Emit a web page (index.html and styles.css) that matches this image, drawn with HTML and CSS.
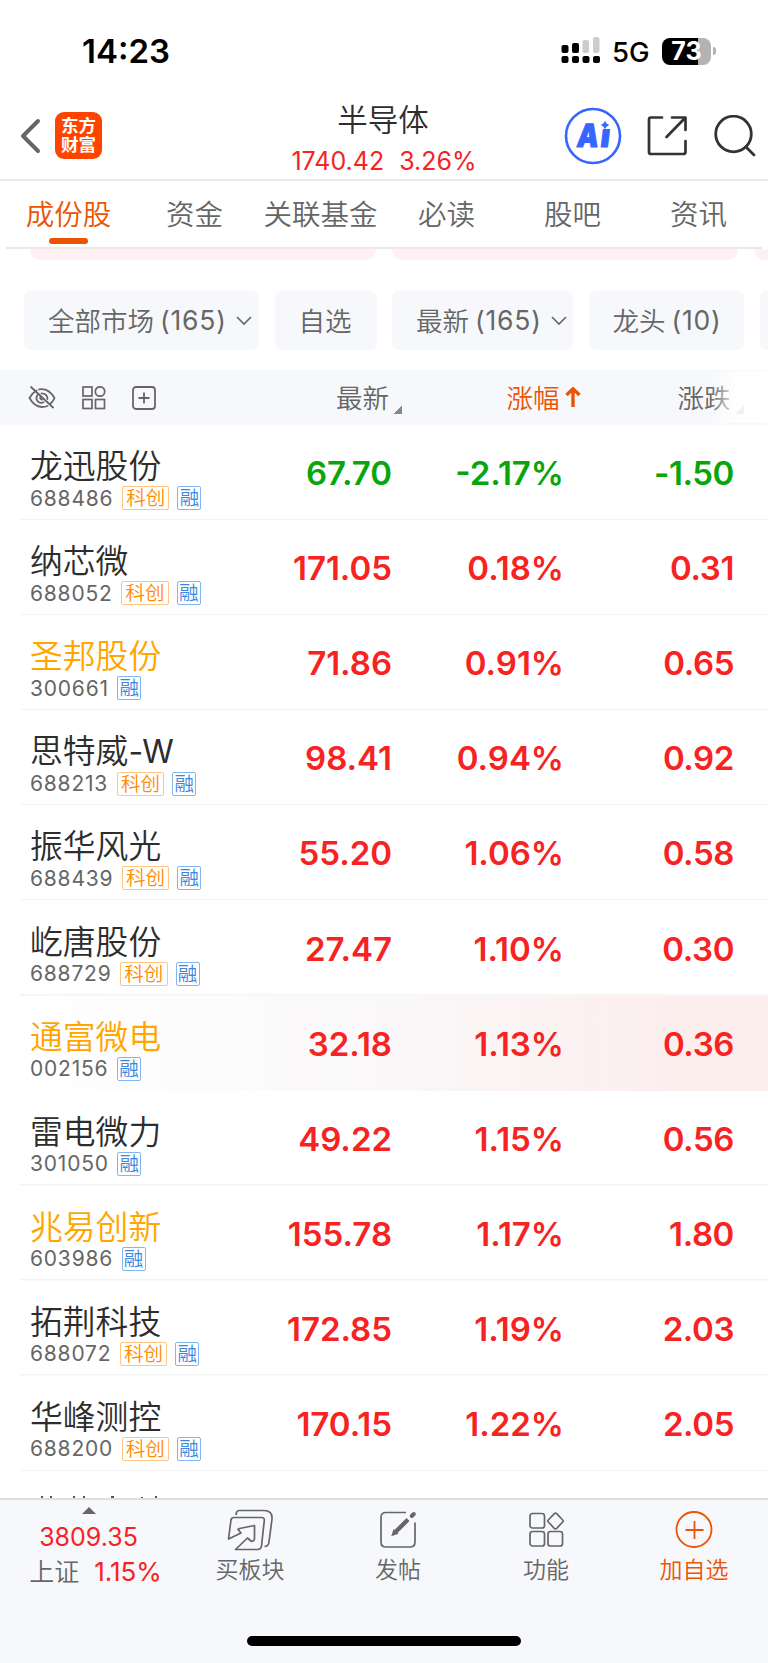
FILE: index.html
```html
<!DOCTYPE html>
<html lang="zh-CN">
<head>
    <meta charset="UTF-8">
    <meta name="viewport" content="width=device-width, initial-scale=1.0">
    <title>半导体</title>
    <link rel="stylesheet" href="styles.css">
</head>
<body>
    <div class="status-bar">
        <span class="clock">14:23</span>
        <svg class="signal" width="40" height="28" viewBox="0 0 40 28">
            <g fill="#000">
                <rect x="0.5" y="9" width="7" height="8" rx="2"/>
                <rect x="11" y="7" width="7" height="10" rx="2"/>
                <rect x="0.5" y="20" width="7" height="7" rx="2"/>
                <rect x="11" y="20" width="7" height="7" rx="2"/>
                <rect x="21.5" y="20" width="7" height="7" rx="2"/>
                <rect x="32" y="20" width="7" height="7" rx="2"/>
            </g>
            <g fill="#ccc">
                <rect x="21.5" y="4" width="6.5" height="13" rx="2"/>
                <rect x="32" y="1" width="6.5" height="16" rx="2"/>
            </g>
        </svg>
        <span class="network">5G</span>
        <div class="battery">73</div>
        <div class="battery-cap"></div>
    </div>

    <header class="nav">
        <div class="nav-left">
            <svg width="21" height="36" viewBox="0 0 21 36" fill="none" stroke="#666" stroke-width="4" stroke-linecap="round" stroke-linejoin="round"><path d="M18 3 L3 18 L18 33"/></svg>
            <div class="logo">东方<br>财富</div>
        </div>
        <div class="nav-title">
            <h1>半导体</h1>
            <p><span>1740.42</span><span>3.26%</span></p>
        </div>
        <div class="nav-icons">
            <svg width="58" height="58" viewBox="0 0 58 58">
                <circle cx="29" cy="29" r="27" fill="#fff" stroke="#3666ff" stroke-width="2.6"/>
                <text class="ai-text" x="0" y="0" transform="translate(12 39.500) skewX(-7) scale(0.85 1)">A</text>
                <text class="ai-text" x="0" y="0" transform="translate(35.500 40) skewX(-7)">ı</text>
                <path d="M41 13.500 Q42 17 45.500 18 Q42 19 41 22.500 Q40 19 36.500 18 Q40 17 41 13.500 Z" fill="#3666ff"/>
            </svg>
            <svg width="42" height="42" viewBox="0 0 42 42" fill="none" stroke="#333" stroke-width="2.7" stroke-linecap="round" stroke-linejoin="round">
                <path d="M15 2.500 H4 Q2 2.500 2 4.500 V37 Q2 39 4 39 H36 Q38.500 39 38.500 37 V26"/>
                <path d="M25 2.500 H38.500 V15 M38 3 L19.500 22"/>
            </svg>
            <svg width="42" height="42" viewBox="0 0 42 42" fill="none" stroke="#333" stroke-width="2.8" stroke-linecap="round">
                <circle cx="19.500" cy="19" r="17.800"/>
                <path d="M32 32 L40 40"/>
            </svg>
        </div>
    </header>

    <nav class="tabs">
        <a class="tab active">成份股</a>
        <a class="tab">资金</a>
        <a class="tab">关联基金</a>
        <a class="tab">必读</a>
        <a class="tab">股吧</a>
        <a class="tab">资讯</a>
    </nav>

    <div class="cards">
        <div class="card"></div>
        <div class="card"></div>
        <div class="card"></div>
    </div>

    <div class="filters">
        <div class="chip chip-market"><span>全部市场</span><span class="count">(165)</span><svg width="16" height="10" viewBox="0 0 16 10" fill="none" stroke="#666" stroke-width="1.6"><path d="M1 1 L8 8 L15 1"/></svg></div>
        <div class="chip chip-own"><span>自选</span></div>
        <div class="chip chip-new"><span>最新</span><span class="count">(165)</span><svg width="16" height="10" viewBox="0 0 16 10" fill="none" stroke="#666" stroke-width="1.6"><path d="M1 1 L8 8 L15 1"/></svg></div>
        <div class="chip chip-lead"><span>龙头</span><span class="count">(10)</span></div>
        <div class="chip chip-more"></div>
    </div>

    <div class="table-head">
        <div class="tools">
            <svg width="28" height="24" viewBox="0 0 28 24" fill="none" stroke="#666" stroke-width="1.8" stroke-linecap="round">
                <path d="M8.500 4.500 Q4 7 1.500 12 Q6 20.500 14 21 Q17 21 19.500 20"/>
                <path d="M11 3.300 Q20.500 1.500 26.500 12 Q25 15.500 22.500 17.500"/>
                <path d="M9.500 9 Q7 13 10.500 16 Q13 17.500 15.500 16.300"/>
                <path d="M13.500 7.300 Q19.500 7.500 19.500 13"/>
                <path d="M12.500 10.500 Q11.500 13 14 13.500"/>
                <path d="M3 1 L25 21.500"/>
            </svg>
            <svg width="24" height="24" viewBox="0 0 24 24" fill="none" stroke="#666" stroke-width="1.7">
                <rect x="1" y="1" width="9" height="9"/>
                <circle cx="18" cy="5.500" r="4.700"/>
                <rect x="1" y="13.500" width="9" height="9"/>
                <rect x="13.500" y="13.500" width="9" height="9"/>
            </svg>
            <svg width="24" height="24" viewBox="0 0 24 24" fill="none" stroke="#666" stroke-width="1.8">
                <rect x="1" y="1" width="22" height="22" rx="3"/>
                <path d="M12 6.500 V17.500 M6.500 12 H17.500"/>
            </svg>
        </div>
        <div class="th th-price">最新<i class="corner"></i></div>
        <div class="th th-pct">涨幅<svg width="16" height="22" viewBox="0 0 16 22" fill="none" stroke="#ea5504" stroke-width="3.400"><path d="M8 21 V3 M1.500 9 L8 2.800 L14.500 9"/></svg></div>
        <div class="th th-diff">涨跌<i class="corner"></i></div>
        <div class="fade"></div>
    </div>

    <main class="list">
        <div class="row down">
            <div class="stock"><div class="name">龙迅股份</div><div class="meta"><span class="code">688486</span><span class="tag kc">科创</span><span class="tag rong">融</span></div></div>
            <div class="price">67.70</div><div class="pct">-2.17%</div><div class="diff">-1.50</div>
        </div>
        <div class="row">
            <div class="stock"><div class="name">纳芯微</div><div class="meta"><span class="code">688052</span><span class="tag kc">科创</span><span class="tag rong">融</span></div></div>
            <div class="price">171.05</div><div class="pct">0.18%</div><div class="diff">0.31</div>
        </div>
        <div class="row own">
            <div class="stock"><div class="name">圣邦股份</div><div class="meta"><span class="code">300661</span><span class="tag rong">融</span></div></div>
            <div class="price">71.86</div><div class="pct">0.91%</div><div class="diff">0.65</div>
        </div>
        <div class="row">
            <div class="stock"><div class="name">思特威<span class="suffix">-W</span></div><div class="meta"><span class="code">688213</span><span class="tag kc">科创</span><span class="tag rong">融</span></div></div>
            <div class="price">98.41</div><div class="pct">0.94%</div><div class="diff">0.92</div>
        </div>
        <div class="row">
            <div class="stock"><div class="name">振华风光</div><div class="meta"><span class="code">688439</span><span class="tag kc">科创</span><span class="tag rong">融</span></div></div>
            <div class="price">55.20</div><div class="pct">1.06%</div><div class="diff">0.58</div>
        </div>
        <div class="row">
            <div class="stock"><div class="name">屹唐股份</div><div class="meta"><span class="code">688729</span><span class="tag kc">科创</span><span class="tag rong">融</span></div></div>
            <div class="price">27.47</div><div class="pct">1.10%</div><div class="diff">0.30</div>
        </div>
        <div class="row own flash">
            <div class="stock"><div class="name">通富微电</div><div class="meta"><span class="code">002156</span><span class="tag rong">融</span></div></div>
            <div class="price">32.18</div><div class="pct">1.13%</div><div class="diff">0.36</div>
        </div>
        <div class="row">
            <div class="stock"><div class="name">雷电微力</div><div class="meta"><span class="code">301050</span><span class="tag rong">融</span></div></div>
            <div class="price">49.22</div><div class="pct">1.15%</div><div class="diff">0.56</div>
        </div>
        <div class="row own">
            <div class="stock"><div class="name">兆易创新</div><div class="meta"><span class="code">603986</span><span class="tag rong">融</span></div></div>
            <div class="price">155.78</div><div class="pct">1.17%</div><div class="diff">1.80</div>
        </div>
        <div class="row">
            <div class="stock"><div class="name">拓荆科技</div><div class="meta"><span class="code">688072</span><span class="tag kc">科创</span><span class="tag rong">融</span></div></div>
            <div class="price">172.85</div><div class="pct">1.19%</div><div class="diff">2.03</div>
        </div>
        <div class="row">
            <div class="stock"><div class="name">华峰测控</div><div class="meta"><span class="code">688200</span><span class="tag kc">科创</span><span class="tag rong">融</span></div></div>
            <div class="price">170.15</div><div class="pct">1.22%</div><div class="diff">2.05</div>
        </div>
        <!-- top edge of the next row -->
        <svg class="next-row" width="130" height="2" viewBox="0 0 130 2" fill="#555">
            <path d="M10 0h2v2h-2z M19 0h2v2h-2z M42 0h2v2h-2z M52 0h2v2h-2z M80 0h3v2h-3z M110 1h2v1h-2z M124 0h2v2h-2z"/>
        </svg>
    </main>

    <footer class="bottom">
        <div class="bottom-row">
            <div class="index">
                <i class="up"></i>
                <div class="index-value">3809.35</div>
                <div class="index-line"><span class="index-name">上证</span><span>1.15%</span></div>
            </div>
            <div class="action">
                <svg width="48" height="44" viewBox="0 0 48 44" fill="none" stroke="#666" stroke-width="1.700" stroke-linejoin="round">
                    <path d="M10 7 L10.500 4.500 Q11 2.500 13.500 2.500 H38 Q46.500 2.500 46 11 L43 34 Q42.500 38.500 38.500 38.500"/>
                    <path d="M2.500 31 L5 12 Q5.400 9.500 8 9.500 H35.500 Q38.700 9.500 38.300 12.500 L35.500 38 Q35 41.500 31.500 41.500 H9.500 L21.500 30 L25.500 33.500 Q28.500 33 28.500 30.500 V17.500 L13.500 20.500 L12 21.500 L15 25 L2.500 31 Z"/>
                </svg>
                <span>买板块</span>
            </div>
            <div class="action">
                <svg width="48" height="44" viewBox="0 0 48 44" fill="none" stroke="#666" stroke-width="1.700">
                    <path d="M32 4.500 H12 Q7 4.500 7 9.500 V34 Q7 39 12 39 H36 Q41 39 41 34 V14.500"/>
                    <path d="M21.500 24 L34 11.500" stroke-width="4.200"/>
                    <path d="M18.500 27 L20 22.500 L23 25.500 Z" fill="#666"/>
                    <path d="M37.800 8 L39.800 6" stroke-width="4" stroke-linecap="round"/>
                </svg>
                <span>发帖</span>
            </div>
            <div class="action">
                <svg width="48" height="44" viewBox="0 0 48 44" fill="none" stroke="#666" stroke-width="1.700">
                    <rect x="8" y="5.500" width="14.500" height="14.500" rx="2.500"/>
                    <path d="M32.300 5.700 Q33.500 4.700 34.700 5.700 L40.700 12 Q41.700 13 40.700 14 L34.700 20.300 Q33.500 21.300 32.300 20.300 L26.300 14 Q25.300 13 26.300 12 Z"/>
                    <rect x="8" y="23.500" width="14.500" height="14.500" rx="2.500"/>
                    <rect x="26" y="23.500" width="14.500" height="14.500" rx="2.500"/>
                </svg>
                <span>功能</span>
            </div>
            <div class="action add">
                <svg width="48" height="44" viewBox="0 0 48 44" fill="none" stroke="#ea5504" stroke-width="1.800">
                    <circle cx="24" cy="21.500" r="17.500"/>
                    <path d="M24.500 13 V31 M15.500 22 H33.500"/>
                </svg>
                <span>加自选</span>
            </div>
        </div>
        <div class="home-bar"></div>
    </footer>
</body>
</html>
```

FILE: styles.css
```css
:root {
    --orange: #ea5504;
    --red: #f72222;
    --green: #09a50b;
    --own: #ffa600;
    --text: #2d2d2d;
    --gray: #666666;
    --panel: #f7f8fb;
    --line: #e9e9ea;
}

* {
    box-sizing: border-box;
    margin: 0;
    padding: 0;
}

body {
    width: 768px;
    height: 1663px;
    overflow: hidden;
    background: #fff;
    color: var(--text);
    font-family: Inter, "Noto Sans CJK SC", sans-serif;
    font-weight: 350;
    display: flex;
    flex-direction: column;
}

svg {
    display: block;
    flex-shrink: 0;
}

/* status bar */
.status-bar {
    height: 92px;
    padding: 10px 52px 0 82px;
    display: flex;
    align-items: center;
    color: #000;
}

.clock {
    font-size: 33px;
    font-weight: 600;
    width: 479px;
}

.signal {
    margin-top: -2px;
}

.network {
    font-size: 27.5px;
    font-weight: 450;
    width: 50px;
    margin-left: 11px;
    padding-top: 2px;
}

.battery {
    width: 49px;
    height: 27px;
    border-radius: 8px;
    background: linear-gradient(90deg, #000 36px, #b3b3b3 36px);
    color: #fff;
    font-size: 25px;
    font-weight: 700;
    line-height: 27px;
    text-align: center;
}

.battery-cap {
    width: 3px;
    height: 8px;
    margin-left: 2px;
    border-radius: 0 3px 3px 0;
    background: #b3b3b3;
}

/* title bar */
.nav {
    height: 89px;
    display: flex;
    justify-content: space-between;
    border-bottom: 2px solid var(--line);
}

.nav-left {
    width: 260px;
    display: flex;
    align-items: center;
    gap: 14px;
    padding-left: 20px;
}

.logo {
    width: 47px;
    height: 47px;
    border-radius: 9px;
    background: #ff4400;
    color: #fff;
    font-size: 17.5px;
    font-weight: 700;
    line-height: 19px;
    text-align: center;
    padding-top: 4px;
}

.nav-title {
    text-align: center;
}

.nav-title h1 {
    font-size: 30.5px;
    font-weight: 350;
    line-height: 36px;
    margin: 10px 2px 0 0;
}

.nav-title p {
    display: flex;
    justify-content: center;
    gap: 15px;
    color: var(--red);
    font-size: 25px;
    font-weight: 400;
    line-height: 30px;
    margin-top: 8px;
}

.nav-icons {
    width: 260px;
    display: flex;
    align-items: center;
    justify-content: flex-end;
    gap: 25px;
    padding-right: 11.5px;
}

.ai-text {
    font-size: 32px;
    font-weight: 900;
    fill: #3666ff;
    stroke: #3666ff;
    stroke-width: 1px;
    stroke-linejoin: round;
}

/* tabs */
.tabs {
    height: 68px;
    margin: 0 6px;
    display: flex;
    border-bottom: 2px solid var(--line);
}

.tab {
    flex: 1 0 0;
    display: flex;
    flex-direction: column;
    align-items: center;
    padding: 13px 1px 0 0;
    font-size: 28.5px;
    line-height: 42px;
    color: var(--gray);
    white-space: nowrap;
}

.tab.active {
    color: var(--orange);
}

.tab.active::after {
    content: "";
    width: 39px;
    height: 6px;
    margin-top: 2px;
    border-radius: 3px;
    background: var(--orange);
}

.cards {
    height: 11px;
    padding-left: 30px;
    display: flex;
    gap: 16px;
    overflow: hidden;
}

.card {
    flex: 0 0 346px;
    background: #fff0f1;
    border-radius: 0 0 12px 12px;
}

/* filters */
.filters {
    margin: 31px 0 20px;
    height: 59px;
    padding-left: 24px;
    display: flex;
    gap: 15.5px;
    overflow: hidden;
}

.chip {
    flex-shrink: 0;
    display: flex;
    align-items: center;
    border-radius: 7px;
    background: var(--panel);
    color: var(--gray);
    font-size: 26.5px;
    padding: 0 0 2px 24px;
}

.chip .count {
    font-size: 26.5px;
    font-weight: 400;
    letter-spacing: 0.8px;
    margin-left: 6px;
}

.chip svg {
    margin: 2px 0 0 9px;
}

.chip-market {
    width: 235px;
}

.chip-own {
    width: 102px;
}

.chip-new {
    width: 181px;
}

.chip-lead {
    width: 155.5px;
}

.chip-more {
    width: 120px;
}

/* table head */
.table-head {
    position: relative;
    height: 55px;
    display: flex;
    align-items: center;
    background: var(--panel);
    color: var(--gray);
    font-size: 26.5px;
}

.tools {
    width: 200px;
    display: flex;
    align-items: center;
    gap: 26px;
    padding-left: 27.5px;
}

.th {
    display: flex;
    align-items: center;
    justify-content: flex-end;
    margin-top: -2px;
}

.th-price {
    width: 202px;
}

.th-pct {
    width: 178.5px;
    color: var(--orange);
}

.th-pct svg {
    margin: 1px 0 0 5px;
}

.th-diff {
    width: 163px;
}

.corner {
    width: 8px;
    height: 8px;
    margin: 26px 0 0 5px;
    background: linear-gradient(135deg, transparent 50%, #888 50%);
}

.fade {
    position: absolute;
    right: 0;
    top: 1px;
    bottom: 2px;
    width: 58px;
    background: linear-gradient(90deg, rgba(255, 255, 255, 0), rgba(255, 255, 255, 0.85) 26px, #fff);
}

/* stock list */
.list {
    height: 1073px;
    overflow: hidden;
}

.row {
    height: 95.1px;
    display: flex;
    align-items: center;
    color: var(--red);
    background: linear-gradient(#f3f3f4, #f3f3f4) 20px 100% / 100% 1.500px no-repeat;
}

.row.down {
    color: var(--green);
}

.row.flash {
    background: linear-gradient(90deg, #fff 20px, #faf8f9 50%, #fdeeee 88%, #fdeeee);
}

.stock {
    width: 230px;
    padding: 11px 0 0 30px;
}

.name {
    font-size: 32.8px;
    line-height: 40px;
    color: var(--text);
    white-space: nowrap;
}

.name .suffix {
    font-size: 32px;
    font-weight: 400;
    letter-spacing: -0.8px;
}

.row.own .name {
    color: var(--own);
}

.meta {
    display: flex;
    align-items: center;
    height: 24px;
}

.code {
    font-size: 21px;
    font-weight: 400;
    letter-spacing: 0.8px;
    color: var(--gray);
    margin-right: 8.5px;
}

.tag {
    height: 24px;
    border: 1.500px solid;
    border-radius: 2px;
    font-size: 19.5px;
    line-height: 22px;
    text-align: center;
    margin-right: 8px;
}

.tag.kc {
    width: 47.5px;
    color: #ff8c00;
    border-color: #ffc583;
}

.tag.rong {
    width: 24px;
    color: #3a87e0;
    border-color: #82b6f0;
}

.price,
.pct,
.diff {
    font-size: 33px;
    font-weight: 600;
    text-align: right;
    padding-top: 1px;
}

.price {
    width: 162px;
}

.pct {
    width: 172px;
}

.diff {
    width: 170px;
    letter-spacing: -0.4px;
}

.next-row {
    margin: 25px 0 0 31px;
}

/* bottom bar */
.bottom {
    height: 165px;
    border-top: 2px solid #dcdee2;
    background: var(--panel);
}

.bottom-row {
    display: flex;
    height: 136px;
}

.index {
    width: 176px;
    display: flex;
    flex-direction: column;
    align-items: center;
    padding-left: 1px;
    color: var(--red);
    font-size: 25px;
    font-weight: 400;
}

.up {
    margin-top: 7px;
    border: 7px solid transparent;
    border-top: 0;
    border-bottom-color: var(--gray);
}

.index-value {
    line-height: 34px;
    margin-top: 6px;
}

.index-line {
    display: flex;
    gap: 15px;
    line-height: 34px;
    margin-top: 1px;
    padding-left: 14px;
    font-size: 26px;
}

.index-name {
    color: var(--gray);
    font-size: 25px;
    font-weight: 350;
}

.action {
    width: 148px;
    display: flex;
    flex-direction: column;
    align-items: center;
    padding-top: 8px;
    color: var(--gray);
    font-size: 23px;
    line-height: 36px;
}

.action.add {
    color: var(--orange);
}

.home-bar {
    width: 274px;
    height: 10px;
    border-radius: 5px;
    margin-left: 247px;
    background: #000;
}
```
